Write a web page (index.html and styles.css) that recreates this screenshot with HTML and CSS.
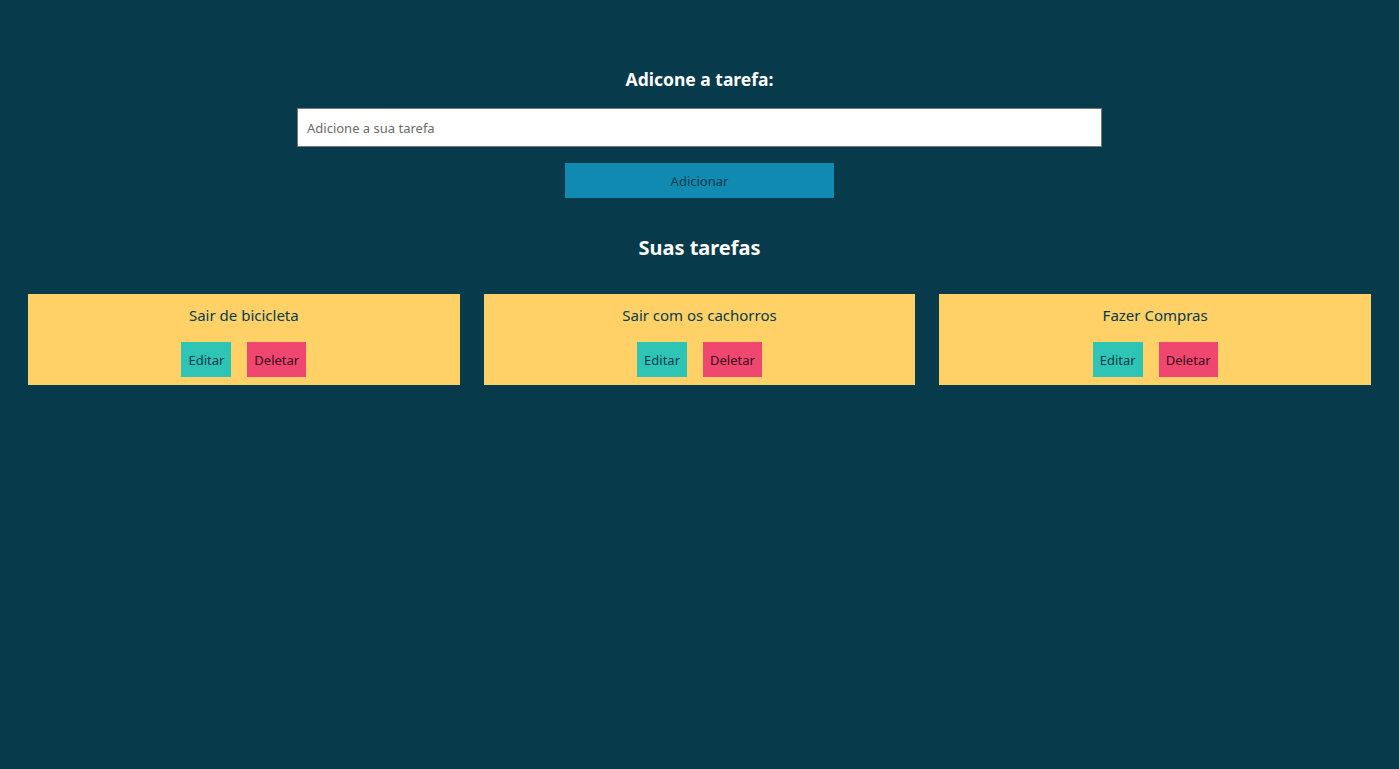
FILE: index.html
```html
<!DOCTYPE html>
<html lang="pt-BR">
<head>
<meta charset="utf-8">
<title>Tarefas</title>
<link rel="stylesheet" href="styles.css">
</head>
<body>
<main class="app">
  <section class="add">
    <h2 class="add-title">Adicone a tarefa:</h2>
    <input class="add-input" type="text" placeholder="Adicione a sua tarefa">
    <button class="add-btn">Adicionar</button>
  </section>
  <h1 class="list-title">Suas tarefas</h1>
  <section class="tasks">
    <div class="task">
      <p class="task-name">Sair de bicicleta</p>
      <div class="task-actions">
        <button class="btn btn-edit">Editar</button>
        <button class="btn btn-del">Deletar</button>
      </div>
    </div>
    <div class="task">
      <p class="task-name">Sair com os cachorros</p>
      <div class="task-actions">
        <button class="btn btn-edit">Editar</button>
        <button class="btn btn-del">Deletar</button>
      </div>
    </div>
    <div class="task">
      <p class="task-name">Fazer Compras</p>
      <div class="task-actions">
        <button class="btn btn-edit">Editar</button>
        <button class="btn btn-del">Deletar</button>
      </div>
    </div>
  </section>
</main>
</body>
</html>
```

FILE: styles.css
```css
* { box-sizing: border-box; }
html, body { height: 100%; }
body {
  margin: 0;
  background: #073a4b;
  font-family: "Noto Sans", "Open Sans", sans-serif;
  color: #fff;
}
.app {
  padding: 66px 28px 0 28px;
}
.add {
  display: flex;
  flex-direction: column;
  align-items: center;
}
.add-title {
  margin: 0;
  font-size: 17.5px;
  font-weight: 700;
  line-height: 26px;
}
.add-input {
  margin-top: 16px;
  width: 805px;
  height: 39px;
  border: 1px solid #777;
  padding: 0 9px;
  font-family: inherit;
  font-size: 13px;
  color: #333;
  background: #fff;
  outline: none;
}
.add-input::placeholder { color: #6b6b6b; }
.add-btn {
  margin-top: 16px;
  width: 269px;
  height: 35px;
  border: none;
  background: #118ab2;
  color: #073b4c;
  font-family: inherit;
  font-size: 13px;
}
.list-title {
  margin: 34px 0 0 0;
  text-align: center;
  font-size: 20px;
  font-weight: 700;
  line-height: 32px;
}
.tasks {
  margin-top: 30px;
  display: grid;
  grid-template-columns: repeat(3, 1fr);
  column-gap: 24px;
}
.task {
  background: #ffd166;
  height: 91px;
  display: flex;
  flex-direction: column;
  align-items: center;
  padding-top: 10px;
}
.task-name {
  margin: 0;
  color: #073b4c;
  font-size: 15px;
  line-height: 22px;
}
.task-actions {
  margin-top: 16px;
  display: flex;
  gap: 16px;
}
.btn {
  height: 35px;
  border: none;
  font-family: inherit;
  font-size: 13px;
  padding: 0 7px;
  color: #073b4c;
}
.btn-edit { background: #2ec4b6; }
.btn-del { background: #ef476f; color: #3a0b1a; }
```
